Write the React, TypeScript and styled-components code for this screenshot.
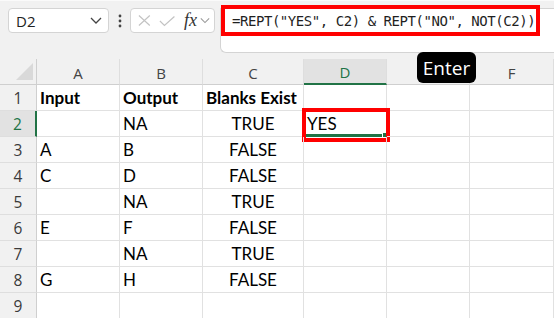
import React from 'react';
import styled, { createGlobalStyle } from 'styled-components';

const GlobalStyle = createGlobalStyle`
  html, body {
    margin: 0;
    padding: 0;
    background: #ffffff;
  }
  body {
    font-family: Lato, "Liberation Sans", sans-serif;
  }
`;

const columns = ['A', 'B', 'C', 'D', 'E', 'F'];

const data = [
  ['Input', 'Output', 'Blanks Exist', ''],
  ['', 'NA', 'TRUE', 'YES'],
  ['A', 'B', 'FALSE', ''],
  ['C', 'D', 'FALSE', ''],
  ['', 'NA', 'TRUE', ''],
  ['E', 'F', 'FALSE', ''],
  ['', 'NA', 'TRUE', ''],
  ['G', 'H', 'FALSE', ''],
  ['', '', '', ''],
];

const App = () => {
  return (
    <>
      <GlobalStyle />
      <Page>
        <Toolbar>
          <NameBox>
            <span>D2</span>
            <Chevron width="12" height="7" viewBox="0 0 12 7">
              <polyline points="1,1 6,6 11,1" />
            </Chevron>
          </NameBox>
          <Dots>
            <svg width="4" height="14" viewBox="0 0 4 14">
              <circle cx="2" cy="2" r="1.4" fill="#444" />
              <circle cx="2" cy="7" r="1.4" fill="#444" />
              <circle cx="2" cy="12" r="1.4" fill="#444" />
            </svg>
          </Dots>
          <FxBox>
            <svg width="14" height="13" viewBox="0 0 14 13">
              <path d="M1 1 L13 12 M13 1 L1 12" stroke="#c3c3c3" strokeWidth="1.3" fill="none" />
            </svg>
            <svg width="18" height="12" viewBox="0 0 18 12">
              <polyline points="1,6 6,11 17,1" stroke="#c3c3c3" strokeWidth="1.3" fill="none" />
            </svg>
            <FxLabel>fx</FxLabel>
            <Chevron width="11" height="7" viewBox="0 0 12 7" $light>
              <polyline points="1,1 6,6 11,1" />
            </Chevron>
          </FxBox>
          <FormulaBar>
            <FormulaHighlight>=REPT("YES", C2) &amp; REPT("NO", NOT(C2))</FormulaHighlight>
          </FormulaBar>
        </Toolbar>

        <Sheet>
          <Corner>
            <svg width="17" height="17" viewBox="0 0 17 17">
              <polygon points="17,0 17,17 0,17" fill="#d9d9d9" />
            </svg>
          </Corner>
          {columns.map((c) => (
            <ColHeader key={c} $active={c === 'D'}>{c}</ColHeader>
          ))}
          {data.map((row, i) => (
            <React.Fragment key={i}>
              <RowHeader $active={i === 1}>{i + 1}</RowHeader>
              <Cell $bold={i === 0}>{row[0]}</Cell>
              <Cell $bold={i === 0}>{row[1]}</Cell>
              <Cell $bold={i === 0} $center={i !== 0}>{row[2]}</Cell>
              <Cell>
                {row[3]}
                {i === 1 && (
                  <>
                    <SelectLine />
                    <FillHandle />
                    <Callout />
                  </>
                )}
              </Cell>
              <Cell />
              <Cell />
            </React.Fragment>
          ))}
        </Sheet>

        <KeyTip>Enter</KeyTip>
      </Page>
    </>
  );
};

export default App;

const Page = styled.div`
  position: relative;
  width: 554px;
  height: 318px;
  overflow: hidden;
  background: #ffffff;
`;

const Toolbar = styled.div`
  display: flex;
  align-items: flex-start;
  height: 59px;
  box-sizing: border-box;
  padding: 7px 0 0 8px;
  background: #f1f1f1;
  border-top: 1px solid #fafafa;
`;

const NameBox = styled.div`
  display: flex;
  align-items: center;
  justify-content: space-between;
  width: 101px;
  height: 25px;
  box-sizing: border-box;
  padding: 0 6px 0 7px;
  background: #ffffff;
  border: 1px solid #d4d4d4;
  border-radius: 4px;
  font-family: "Open Sans", sans-serif;
  font-size: 15px;
  color: #222;
`;

const Chevron = styled.svg<{ $light?: boolean }>`
  polyline {
    fill: none;
    stroke: ${(p) => (p.$light ? '#9a9a9a' : '#444')};
    stroke-width: 1.3;
  }
`;

const Dots = styled.div`
  display: flex;
  justify-content: center;
  width: 21px;
  padding-top: 6px;
`;

const FxBox = styled.div`
  display: flex;
  align-items: center;
  gap: 8px;
  width: 85px;
  height: 25px;
  box-sizing: border-box;
  padding: 0 4px 0 7px;
  background: #ffffff;
  border: 1px solid #d4d4d4;
  border-radius: 4px;
`;

const FxLabel = styled.span`
  font-family: "Liberation Serif", serif;
  font-style: italic;
  font-size: 18px;
  color: #333;
  margin-left: 1px;
  margin-right: -5px;
`;

const FormulaBar = styled.div`
  flex: 1;
  height: 45px;
  margin-left: 5px;
  box-sizing: border-box;
  background: #ffffff;
  border: 1px solid #d4d4d4;
  border-right: none;
  border-bottom-left-radius: 6px;
`;

const FormulaHighlight = styled.div`
  display: flex;
  align-items: center;
  width: 319px;
  height: 31px;
  margin: -4px 0 0 0;
  box-sizing: border-box;
  padding-left: 7px;
  border: 4px solid #ff0000;
  font-family: "DejaVu Sans Mono", "Liberation Mono", monospace;
  font-size: 14px;
  letter-spacing: -0.45px;
  color: #1f1f1f;
  white-space: pre;
`;

const Sheet = styled.div`
  display: grid;
  grid-template-columns: 37px 83px 83px 101px 83px 83px 84px;
  grid-auto-rows: 26px;
`;

const Corner = styled.div`
  display: flex;
  align-items: flex-end;
  justify-content: flex-end;
  padding: 0 3px 4px 0;
  background: #f1f1f1;
  border-right: 1px solid #cfcfcf;
  border-bottom: 1px solid #cfcfcf;
`;

const ColHeader = styled.div<{ $active?: boolean }>`
  display: flex;
  align-items: center;
  justify-content: center;
  box-sizing: border-box;
  padding-top: 2px;
  background: ${(p) => (p.$active ? '#e2e2e2' : '#f1f1f1')};
  border-right: 1px solid #dedede;
  border-bottom: ${(p) => (p.$active ? '2px solid #217346' : '1px solid #cfcfcf')};
  font-family: "Open Sans", sans-serif;
  font-size: 15px;
  color: ${(p) => (p.$active ? '#217346' : '#444')};
`;

const RowHeader = styled.div<{ $active?: boolean }>`
  display: flex;
  align-items: center;
  justify-content: center;
  box-sizing: border-box;
  background: ${(p) => (p.$active ? '#e2e2e2' : '#f1f1f1')};
  border-right: ${(p) => (p.$active ? '2px solid #217346' : '1px solid #cfcfcf')};
  border-bottom: 1px solid #dedede;
  font-family: "Open Sans", sans-serif;
  font-size: 15.5px;
  color: ${(p) => (p.$active ? '#217346' : '#3a3a3a')};
`;

const Cell = styled.div<{ $bold?: boolean; $center?: boolean }>`
  position: relative;
  box-sizing: border-box;
  padding: 0 3px;
  border-right: 1px solid #e1e1e1;
  border-bottom: 1px solid #e1e1e1;
  font-size: 17px;
  line-height: 25px;
  font-weight: ${(p) => (p.$bold ? 700 : 400)};
  text-align: ${(p) => (p.$center ? 'center' : 'left')};
  color: #000;
  white-space: nowrap;
`;

const SelectLine = styled.div`
  position: absolute;
  left: 0;
  right: 1px;
  bottom: -1px;
  height: 3px;
  background: #217346;
`;

const FillHandle = styled.div`
  position: absolute;
  right: -2px;
  bottom: -2px;
  width: 4px;
  height: 4px;
  background: #217346;
  border: 1px solid #ffffff;
`;

const Callout = styled.div`
  position: absolute;
  left: -2px;
  top: -3px;
  width: 88px;
  height: 34px;
  box-sizing: border-box;
  border: 4px solid #ff0000;
`;

const KeyTip = styled.div`
  position: absolute;
  left: 417px;
  top: 52px;
  width: 59px;
  height: 31px;
  display: flex;
  align-items: center;
  justify-content: center;
  background: #000;
  border-radius: 6px;
  font-family: "Open Sans", sans-serif;
  font-size: 19px;
  color: #fff;
`;
